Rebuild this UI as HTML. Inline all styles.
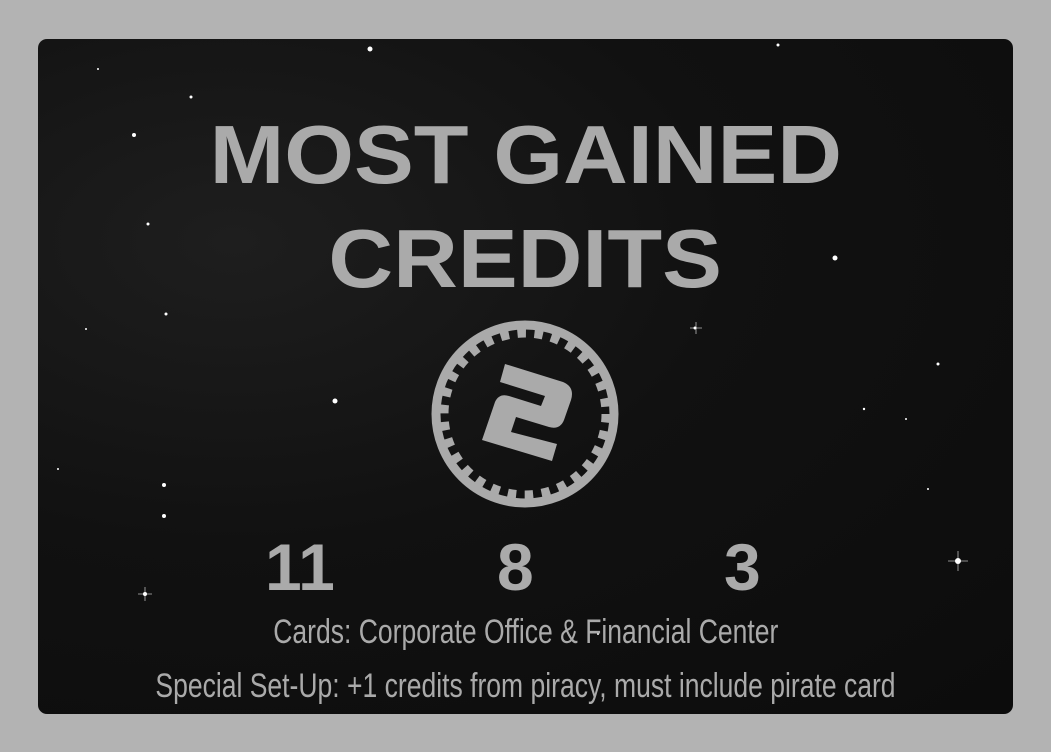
<!DOCTYPE html>
<html><head><meta charset="utf-8"><style>
html,body{margin:0;padding:0;background:#b3b3b3;width:1051px;height:752px;overflow:hidden}
.card{position:absolute;left:38px;top:39px;width:975px;height:675px;border-radius:9px;background:radial-gradient(ellipse at 20% 30%,#1e1e1e 0%,#111 45%,#0c0c0c 100%);overflow:hidden}
.t{position:absolute;left:0;width:975px;text-align:center;color:#aaa;font-family:"Liberation Sans",sans-serif;font-weight:bold;white-space:nowrap}
.t span{display:inline-block;transform:scaleX(1.08);transform-origin:center}
.s{position:absolute;left:0;width:975px;text-align:center;color:#aaa;font-family:"Liberation Sans",sans-serif;white-space:nowrap}
.s span{display:inline-block;transform:scaleX(0.78);transform-origin:center}
.n{position:absolute;color:#aaa;font-family:"Liberation Sans",sans-serif;font-weight:bold;font-size:66px;line-height:1}
</style></head><body>
<div class="card">
<svg width="975" height="675" style="position:absolute;left:0;top:0">
<g fill="#fff">
<circle cx="332" cy="10" r="2.5"/><circle cx="96" cy="96" r="2"/><circle cx="797" cy="219" r="2.5"/><circle cx="297" cy="362" r="2.5"/><circle cx="126" cy="446" r="2"/><circle cx="126" cy="477" r="2"/><circle cx="920" cy="522" r="3"/><circle cx="657" cy="289" r="1.5"/><circle cx="153" cy="58" r="1.5"/><circle cx="110" cy="185" r="1.5"/><circle cx="128" cy="275" r="1.5"/><circle cx="900" cy="325" r="1.5"/><circle cx="826" cy="370" r="1.2"/><circle cx="60" cy="30" r="1"/><circle cx="740" cy="6" r="1.5"/><circle cx="107" cy="555" r="2"/><circle cx="20" cy="430" r="1"/><circle cx="868" cy="380" r="1"/><circle cx="890" cy="450" r="1"/><circle cx="48" cy="290" r="1"/><circle cx="230" cy="130" r="1"/><circle cx="560" cy="595" r="1"/>
</g>
<g stroke="#fff" stroke-width="0.8" opacity="0.7"><path d="M910 522h20M920 512v20M652 289h12M658 283v12M100 555h14M107 548v14"/></g>
</svg>
<div class="t" style="top:71px;font-size:83px;line-height:90px"><span>MOST GAINED</span></div>
<div class="t" style="top:175px;font-size:83px;line-height:90px"><span>CREDITS</span></div>
<svg width="200" height="200" style="position:absolute;left:387px;top:275px" viewBox="0 0 200 200">
<circle cx="100" cy="100" r="89" fill="none" stroke="#aaa" stroke-width="9"/>
<circle cx="100" cy="100" r="81" fill="none" stroke="#aaa" stroke-width="9" stroke-dasharray="8.5 8.5"/>
<path d="M80 50 L138 68 Q150 73 146 86 L139 106 Q135 116 124 113 L91 103 L86 118 L132 130 L127 147 L57 126 L70 88 Q74 79 84 82 L116 92 L120 82 L75 68 Z" fill="#aaa"/>
</svg>
<div class="n" style="left:227px;top:495px">11</div>
<div class="n" style="left:459px;top:495px">8</div>
<div class="n" style="left:686px;top:495px">3</div>
<div class="s" style="top:573px;font-size:34px;line-height:40px"><span>Cards: Corporate Office &amp; Financial Center</span></div>
<div class="s" style="top:627px;font-size:34px;line-height:40px"><span>Special Set-Up: +1 credits from piracy, must include pirate card</span></div>
</div>
</body></html>
